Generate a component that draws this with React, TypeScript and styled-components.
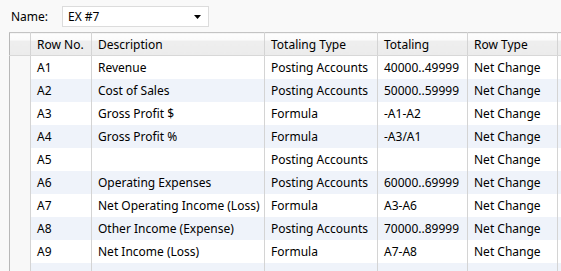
import React from 'react';
import styled, {createGlobalStyle} from 'styled-components';

const GlobalStyle = createGlobalStyle`
  html, body {
    margin: 0;
    padding: 0;
    background: #f9f9f9;
  }
  body {
    font-family: "Noto Sans", "Open Sans", Arial, sans-serif;
    font-size: 12px;
    color: #000;
    overflow: hidden;
  }
`;

const Page = styled.div`
  width: 561px;
  height: 271px;
  overflow: hidden;
  padding-left: 9px;
  box-sizing: border-box;
`;

const Toolbar = styled.div`
  display: flex;
  align-items: center;
  height: 32px;
  padding-left: 2px;
  padding-top: 1px;
  box-sizing: border-box;
  > label {
    width: 51px;
  }
`;

const Select = styled.div`
  position: relative;
  width: 147px;
  height: 21px;
  box-sizing: border-box;
  background: #fff;
  border: 1px solid #dcdcdc;
  display: flex;
  align-items: center;
  padding-left: 5px;
  .arrow {
    position: absolute;
    right: 7px;
    top: 8px;
  }
`;

const Grid = styled.table`
  border-collapse: collapse;
  table-layout: fixed;
  width: 560px;
  border-top: 1px solid #c4c4c4;
  border-left: 1px solid #b8b8b8;
  th, td {
    height: 22px;
    padding: 0 0 0 6px;
    text-align: left;
    font-weight: normal;
    white-space: nowrap;
    overflow: hidden;
    border-right: 1px solid #d4d4d4;
    box-sizing: border-box;
  }
  th {
    height: 23px;
    background: linear-gradient(#fdfdfd 0%, #fbfbfb 30%, #eeeeee 32%, #ececec 100%);
    border-bottom: 1px solid #d8d8d8;
  }
  td {
    height: 23px;
  }
  .sel {
    padding: 0;
    background: #f8f8f8;
  }
  th.sel {
    background: linear-gradient(#fdfdfd 0%, #fbfbfb 30%, #eeeeee 32%, #ececec 100%);
  }
`;

const Row = styled.tr<{$alt: boolean}>`
  background: ${p => (p.$alt ? '#eff3fa' : '#ffffff')};
`;

const columns = [
  {title: '', width: 21},
  {title: 'Row No.', width: 61},
  {title: 'Description', width: 173},
  {title: 'Totaling Type', width: 113},
  {title: 'Totaling', width: 90},
  {title: 'Row Type', width: 90},
  {title: '', width: 20},
];

const rows = [
  ['A1', 'Revenue', 'Posting Accounts', '40000..49999', 'Net Change'],
  ['A2', 'Cost of Sales', 'Posting Accounts', '50000..59999', 'Net Change'],
  ['A3', 'Gross Profit $', 'Formula', '-A1-A2', 'Net Change'],
  ['A4', 'Gross Profit %', 'Formula', '-A3/A1', 'Net Change'],
  ['A5', '', 'Posting Accounts', '', 'Net Change'],
  ['A6', 'Operating Expenses', 'Posting Accounts', '60000..69999', 'Net Change'],
  ['A7', 'Net Operating Income (Loss)', 'Formula', 'A3-A6', 'Net Change'],
  ['A8', 'Other Income (Expense)', 'Posting Accounts', '70000..89999', 'Net Change'],
  ['A9', 'Net Income (Loss)', 'Formula', 'A7-A8', 'Net Change'],
  ['', '', '', '', ''],
];

export default function App() {
  return (
    <Page>
      <GlobalStyle/>
      <Toolbar>
        <label>Name:</label>
        <Select>
          <span>EX #7</span>
          <svg className="arrow" width="7" height="4" viewBox="0 0 7 4">
            <path d="M0 0 H7 L3.5 4 Z" fill="#000"/>
          </svg>
        </Select>
      </Toolbar>
      <Grid>
        <colgroup>
          {columns.map((c, i) => <col key={i} style={{width: c.width}}/>)}
        </colgroup>
        <thead>
          <tr>
            {columns.map((c, i) => (
              <th key={i} className={i === 0 ? 'sel' : undefined}>{c.title}</th>
            ))}
          </tr>
        </thead>
        <tbody>
          {rows.map((r, i) => (
            <Row key={i} $alt={i % 2 === 1}>
              <td className="sel"/>
              {r.map((v, j) => <td key={j}>{v}</td>)}
              <td/>
            </Row>
          ))}
        </tbody>
      </Grid>
    </Page>
  );
}
